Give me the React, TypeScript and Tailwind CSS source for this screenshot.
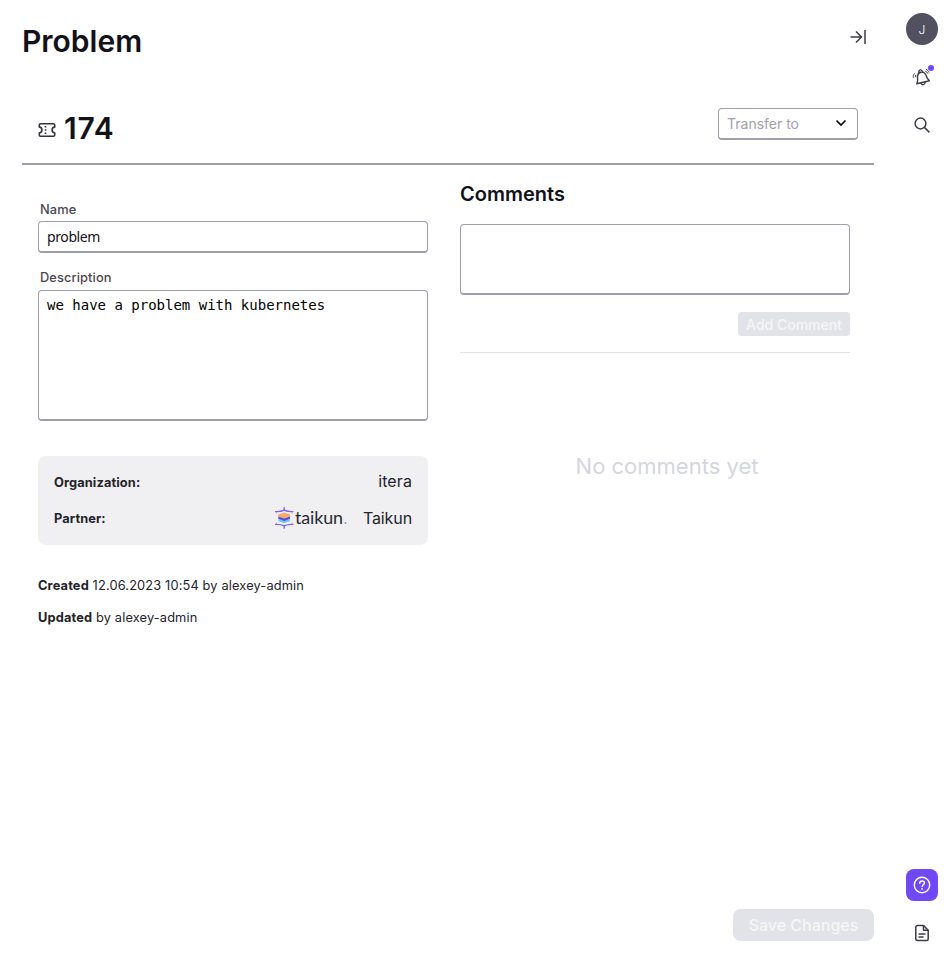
import React from "react";

const fieldBorder = "block w-full rounded border border-b-2 border-[#9f9fac] bg-white px-2 outline-none resize-none";

function TicketIcon() {
  return (
    <svg className="mt-1 h-[18px] w-[18px]" viewBox="0 0 18 18" fill="none" stroke="#32323c" strokeWidth="1.6">
      <path d="M2.6 2.8h12.800a1.300 1.300 0 0 1 1.300 1.300v1.800c-1.700.4-2.600 1.600-2.600 3.100s.9 2.700 2.600 3.100v1.800a1.300 1.300 0 0 1-1.300 1.300H2.600a1.300 1.300 0 0 1-1.300-1.300v-1.800c1.700-.4 2.600-1.600 2.600-3.100s-.9-2.700-2.600-3.100V4.100a1.300 1.300 0 0 1 1.300-1.300Z" />
      <path d="M7.500 5v1.500M7.500 8.200v1.600M7.500 11.500V13" />
    </svg>
  );
}

function CollapseIcon() {
  return (
    <svg className="h-4 w-4" viewBox="0 0 16 16" fill="none" stroke="#3c3c48" strokeWidth="1.5">
      <path d="M0.5 8h11.2M6 2.5 11.5 8 6 13.5M15 1v14" />
    </svg>
  );
}

function BellIcon() {
  return (
    <svg className="h-5 w-5" viewBox="0 0 20 20" fill="none" stroke="#3c3c48" strokeWidth="1.4" strokeLinejoin="round" strokeLinecap="round">
      <path d="M4.800 16.800c.8-1.500 1.100-3 .8-5.100-.5-3.100.6-5.800 3.300-6.400 2.700-.6 4.600 1 5.500 4 .6 2.100 1.400 3.400 3 4.400Z" />
      <path d="M6.900 5.700c-.7-3.200 3-3.900 3.700-.8M9 16.300c.9 2.200 3.900 1.600 4.100-.8" />
      <path d="M2.300 6.700C1.300 7.800 1 9 1.300 10.500M3.600 8.200c-.2.500-.3 1-.2 1.600M13.600 4.200c1 .4 1.700 1.100 2.200 2.100M14.300 2.400c1.300.6 2.200 1.600 2.700 2.800" strokeWidth="1" />
    </svg>
  );
}

function SearchIcon() {
  return (
    <svg className="h-4 w-4" viewBox="0 0 16 16" fill="none" stroke="#3c3c48" strokeWidth="1.500">
      <circle cx="6.500" cy="6.500" r="5.400" />
      <path d="m10.400 10.400 5 5" />
    </svg>
  );
}

function HelpIcon() {
  return (
    <svg className="h-[18px] w-[18px]" viewBox="0 0 18 18" fill="none" stroke="#fff" strokeWidth="1.400" strokeLinecap="round">
      <circle cx="9" cy="9" r="7.700" />
      <path d="M6.700 7.200C6.800 5.800 7.700 5 9.100 5s2.300.9 2.300 2c0 1.700-2.300 1.700-2.300 3.500" />
      <circle cx="9.050" cy="12.900" r=".9" fill="#fff" stroke="none" />
    </svg>
  );
}

function DocumentIcon() {
  return (
    <svg className="h-[18px] w-[18px]" viewBox="0 0 18 18" fill="none" stroke="#3c3c48" strokeWidth="1.500" strokeLinejoin="round" strokeLinecap="round">
      <path d="M10.500 1.500H4.300a1.500 1.500 0 0 0-1.500 1.500v12a1.500 1.500 0 0 0 1.500 1.500h9.400a1.500 1.500 0 0 0 1.500-1.500V6.200l-4.700-4.700Z" />
      <path d="M10.500 1.700v4.500H15M6 10h6M6 13h4" />
    </svg>
  );
}

function TaikunLogo() {
  return (
    <svg className="h-[22px] w-[72px]" viewBox="0 0 72 22" fill="none">
      <path d="M0 4.600c3.500 0 5.500.4 9.200-1.500 3.700 1.900 5.700 1.500 9.200 1.500M0 17.400c3.500 0 5.500-.4 9.200 1.500 3.700-1.900 5.700-1.500 9.200-1.500M9.200.2V4M9.200 18v3.800" stroke="#8060f2" strokeWidth="1.400" />
      <path d="M1.500 5v2M16.900 5v2M1.500 15V17M16.900 15V17" stroke="#b7a5f7" strokeWidth=".7" />
      <path d="m3.300 12.500 5.900-2 5.900 2V14l-5.900 2.200-5.900-2.200Z" fill="#68cdf6" />
      <path d="m3.300 9 5.900 2 5.900-2v2.800l-5.900 2.200-5.900-2.200Z" fill="#6549df" />
      <path d="m3.300 7.600 5.900-2.200 5.900 2.200v1.900l-5.900 2.100-5.900-2.100Z" fill="#f0ae6a" />
      <text x="20" y="16.500" fontFamily="Lato, sans-serif" fontSize="17" fill="#292931" textLength="48" lengthAdjust="spacingAndGlyphs">taikun</text>
      <circle cx="70.500" cy="16" r=".9" fill="#9876f5" />
    </svg>
  );
}

export default function App() {
  return (
    <div className="flex h-[965px] w-[946px] overflow-hidden bg-white font-['Inter',sans-serif] text-[#23232b]">
      <main className="ml-[22px] flex w-[852px] flex-col">
        <header className="flex h-[84px] items-start justify-between pr-2">
          <h1 className="mt-[21px] text-[30px] leading-10 font-semibold text-[#12121a]">Problem</h1>
          <button className="mt-[29px]" aria-label="Collapse"><CollapseIcon /></button>
        </header>

        <section className="flex h-[81px] items-start justify-between border-b-2 border-[#9f9fac] px-4 pt-6">
          <div className="flex h-10 items-center gap-2">
            <TicketIcon />
            <h2 className="text-[30px] leading-10 font-semibold tracking-[0.7px] text-[#12121a]">174</h2>
          </div>
          <button className="flex h-8 w-[140px] items-center justify-between rounded border border-b-2 border-[#9f9fac] pr-[10px] pl-2 text-sm text-[#9f9fac]">
            <span>Transfer to</span>
            <svg className="mb-px h-2 w-3" viewBox="0 0 12 8" fill="none" stroke="#000" strokeWidth="1.600"><path d="m1.500 1.500 4.500 4.500 4.500-4.500" /></svg>
          </button>
        </section>

        <div className="flex flex-1 gap-8 px-4">
          <section className="w-[390px] pt-9">
            <label className="block h-5 pl-0.5 text-[12.8px] leading-[17px] font-medium tracking-[0.12px] text-[#484852]">Name</label>
            <input className={`${fieldBorder} h-8 font-['Noto_Sans',sans-serif] text-sm tracking-[-0.4px] text-[#12121a]`} defaultValue="problem" />
            <label className="mt-4 block h-[21px] pl-0.5 text-[12.8px] leading-[17px] font-medium tracking-[0.12px] text-[#484852]">Description</label>
            <textarea className={`${fieldBorder} h-[131px] py-[5px] font-['DejaVu_Sans_Mono',monospace] text-sm leading-[18px] text-black`} defaultValue="we have a problem with kubernetes" />

            <dl className="mt-[35px] h-[89px] rounded-lg bg-[#f0f0f3] px-4 pt-2">
              <div className="flex h-9 items-center justify-between">
                <dt className="pt-px text-[12.8px] font-bold tracking-[0.12px]">Organization:</dt>
                <dd className="pb-0.5 text-base tracking-[0.1px]">itera</dd>
              </div>
              <div className="flex h-9 items-center justify-between">
                <dt className="pt-px text-[12.8px] font-bold tracking-[0.12px]">Partner:</dt>
                <dd className="flex items-center gap-4 text-base tracking-[-0.1px]"><TaikunLogo /><span>Taikun</span></dd>
              </div>
            </dl>
            <div className="mt-[31px] space-y-3 text-[12.8px] leading-5 tracking-[0.15px]">
              <p><b>Created</b> 12.06.2023 10:54 by alexey-admin</p>
              <p><b>Updated</b> by alexey-admin</p>
            </div>
          </section>

          <section className="flex w-[390px] flex-col pt-[17px]">
            <h3 className="text-xl leading-6 font-semibold text-[#12121a]">Comments</h3>
            <textarea className={`${fieldBorder} mt-[18px] h-[71px]`} aria-label="Comment" />
            <div className="mt-[17px] flex justify-end border-b border-[#e2e3e8] pb-4">
              <button className="h-6 w-28 rounded bg-[#e2e3e8] pt-0.5 text-sm leading-[22px] font-medium text-[#f6f6f8]">Add Comment</button>
            </div>
            <p className="mt-[97px] pl-6 text-center text-[22px] leading-8 text-[#d5d6dd]">No comments yet</p>
          </section>
        </div>
        <footer className="mb-6 flex justify-end">
          <button className="h-8 w-[141px] rounded-lg bg-[#e2e3e8] text-base font-medium text-[#f6f6f8]">Save Changes</button>
        </footer>
      </main>

      <aside className="ml-8 flex w-8 flex-col gap-4 pt-[13px] pb-4">
        <div className="flex h-8 w-8 items-center justify-center rounded-full bg-[#51515f] pt-px text-xs font-light text-white">J</div>
        <button className="relative flex h-8 w-8 items-center justify-center" aria-label="Notifications">
          <BellIcon />
          <span className="absolute top-1 right-1 h-1.5 w-1.5 rounded-full bg-[#7048f6]" />
        </button>
        <button className="flex h-8 w-8 items-center justify-center" aria-label="Search"><SearchIcon /></button>
        <button className="mt-auto flex h-8 w-8 shrink-0 items-center justify-center rounded-lg bg-[#7048f6]" aria-label="Help"><HelpIcon /></button>
        <button className="flex h-8 w-8 shrink-0 items-center justify-center" aria-label="Documentation"><DocumentIcon /></button>
      </aside>
    </div>
  );
}
